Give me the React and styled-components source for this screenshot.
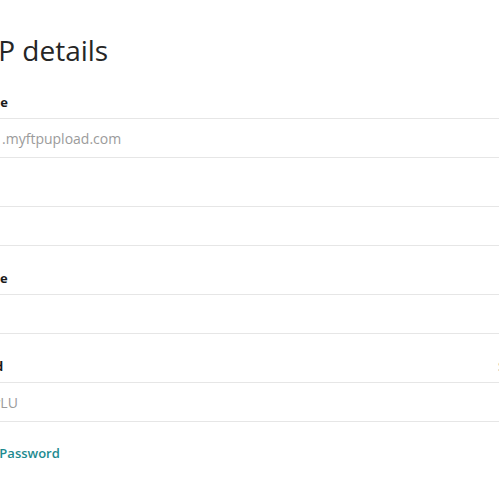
import { styled, createGlobalStyle } from "styled-components";

const GlobalStyle = createGlobalStyle`
  html, body {
    margin: 0;
    padding: 0;
    background: #ffffff;
    overflow: hidden;
  }
  body {
    font-family: "Open Sans", "Liberation Sans", sans-serif;
    color: #2b2b2b;
  }
`;

// the panel is wider than the window and starts left of it, like the shot
const Panel = styled.section`
  width: 591px;
  margin-left: -59px;
  padding-top: 32px;
  display: flex;
  flex-direction: column;
`;

const Title = styled.h2`
  margin: 0 0 26px 12px;
  font-size: 28px;
  line-height: 36px;
  font-weight: 400;
  color: #262626;
`;

const Fields = styled.div`
  display: flex;
  flex-direction: column;
  gap: 24px;
`;

const Group = styled.div`
  display: flex;
  flex-direction: column;
  gap: 8px;
`;

const LabelRow = styled.div`
  display: flex;
  justify-content: space-between;
  align-items: center;
  height: 16px;
`;

const Label = styled.label`
  font-size: 13px;
  line-height: 16px;
  font-weight: 700;
  color: #1a1a1a;
`;

const Toggle = styled.button`
  border: none;
  background: none;
  padding: 0;
  font-family: inherit;
  font-size: 13px;
  font-weight: 600;
  line-height: 16px;
  color: #1d8a8f;
  cursor: pointer;
`;

const Input = styled.input`
  box-sizing: border-box;
  height: 40px;
  width: 100%;
  border: 1px solid #e6e6e6;
  border-radius: 4px;
  padding: 0 0 0 12px;
  font-family: inherit;
  font-size: 14px;
  color: #9b9b9b;
  background: #ffffff;
  outline: none;
`;

const LinkRow = styled.div`
  margin-top: 19px;
  padding-left: 8px;
`;

const Link = styled.a`
  font-size: 13px;
  line-height: 18px;
  font-weight: 600;
  color: #1d8a8f;
  text-decoration: none;
  cursor: pointer;
`;

const fields = [
  { id: "host", label: "Hostname", value: "a3f.2e1.myftpupload.com" },
  { id: "port", label: "Port", value: "22" },
  { id: "user", label: "Username", value: "client_l" },
  { id: "pass", label: "Password", value: "8uQ2wLU", toggle: "Show" },
];

const App = () => {
  return (
    <>
      <GlobalStyle />
      <Panel>
        <Title>SFTP details</Title>
        <Fields>
          {fields.map((f) => (
            <Group key={f.id}>
              <LabelRow>
                <Label htmlFor={f.id}>{f.label}</Label>
                {f.toggle && <Toggle type="button">{f.toggle}</Toggle>}
              </LabelRow>
              <Input id={f.id} defaultValue={f.value} readOnly />
            </Group>
          ))}
        </Fields>
        <LinkRow>
          <Link>Change Password</Link>
        </LinkRow>
      </Panel>
    </>
  );
};

export default App;
